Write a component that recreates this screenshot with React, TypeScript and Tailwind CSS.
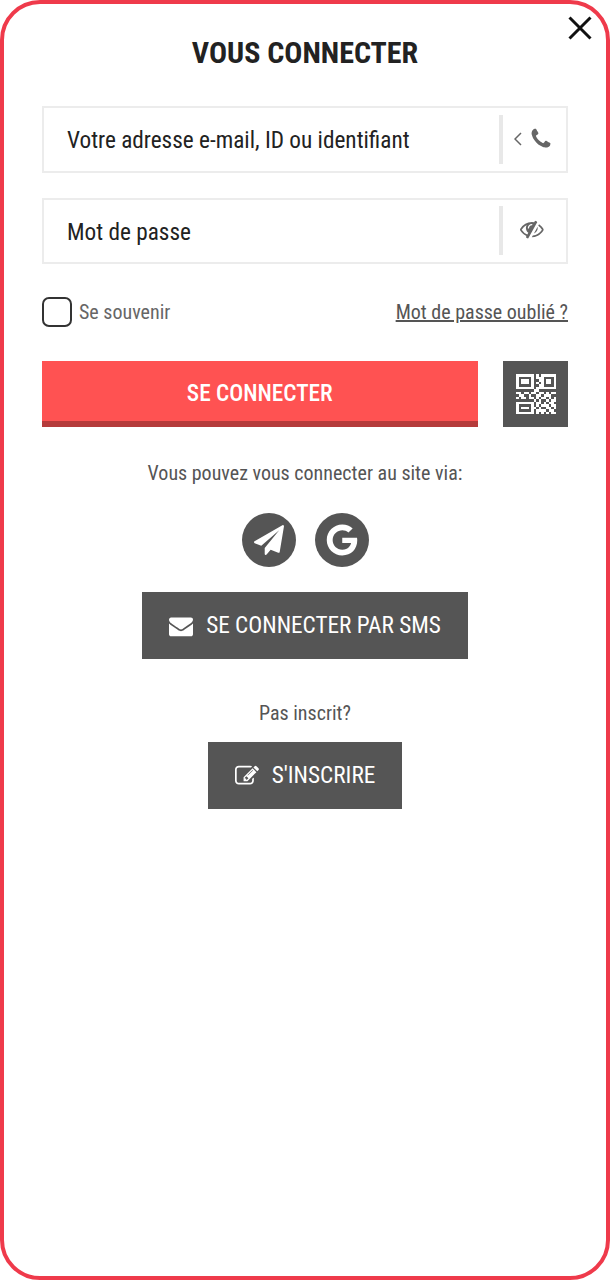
import React from "react";
import { FaGoogle } from "react-icons/fa";

const condensed = "[font-family:Roboto,'Liberation_Sans',sans-serif] [font-stretch:75%]";

// font awesome 4 glyphs, the 5 versions have different shapes
const planePath = "M1764 11q33 24 27 64l-256 1536q-5 29-32 45-14 8-31 8-11 0-24-5l-453-185-242 295q-18 23-49 23-13 0-22-4-19-7-30.5-23.5t-11.5-36.5v-349l864-1059-1069 925-395-162q-37-14-40-55-2-40 32-59l1664-960q15-9 32-9 20 0 36 11z";
const editPath = "M888 1184l116-116-152-152-116 116v56h96v96h56zm440-720q-16-16-33 1l-350 350q-17 17-1 33t33-1l350-350q17-17 1-33zm80 594v190q0 119-84.500 203.500t-203.500 84.500h-832q-119 0-203.500-84.500t-84.500-203.500v-832q0-119 84.500-203.500t203.500-84.500h832q63 0 117 25 15 7 18 23 3 17-9 29l-49 49q-14 14-32 8-23-6-45-6h-832q-66 0-113 47t-47 113v832q0 66 47 113t113 47h832q66 0 113-47t47-113v-126q0-13 9-22l64-64q15-15 35-7t20 29zm-96-738l288 288-672 672h-288v-288zm444 132l-92 92-288-288 92-92q28-28 68-28t68 28l152 152q28 28 28 68t-28 68z";
const envelopePath = "M1792 710v794q0 66-47 113t-113 47h-1472q-66 0-113-47t-47-113v-794q44 49 101 87 362 246 497 345 57 42 92.500 65.500t94.500 48 110 24.500h2q51 0 110-24.500t94.500-48 92.500-65.500q170-123 498-345 57-39 100-87zm0-294q0 79-49 151t-122 123q-376 261-468 325-10 7-42.500 30.500t-54 38-52 32.500-57.500 27-50 9h-2q-23 0-50-9t-57.500-27-52-32.500-54-38-42.500-30.500q-91-64-262-182.500t-205-142.500q-62-42-117-115.500t-55-136.500q0-78 41.500-130t118.500-52h1472q65 0 112.500 47t47.500 113z";
const eyeSlashPath = "M555 1335l78-141q-87-63-136-159t-49-203q0-121 61-225-229 117-381 353 167 258 427 375zm389-759q0-20-14-34t-34-14q-125 0-214.500 89.500t-89.500 214.500q0 20 14 34t34 14 34-14 14-34q0-86 61-147t147-61q20 0 34-14t14-34zm363-191q0 7-1 9-106 189-316 567t-315 566l-49 89q-10 16-28 16-12 0-134-70-16-10-16-28 0-12 44-87-143-65-263.500-173t-208.500-245q-20-31-20-69t20-69q153-235 380-371t496-136q89 0 180 17l54-97q10-16 28-16 5 0 18 6t31 15.500 33 18.500 31.500 18.500 19.500 11.500q16 10 16 27zm37 447q0 139-79 253.500t-209 164.500l280-502q8 45 8 84zm448 128q0 35-20 69-39 64-109 145-150 172-347.500 267t-419.500 95l74-132q212-18 392.500-137t301.500-307q-115-179-282-294l63-112q95 64 182.500 153t144.500 184q20 34 20 69z";
const phonePath = "M1600 1240q0 27-10 70.500t-21 68.500q-21 50-122 106-94 51-186 51-27 0-53-3.500t-57.500-12.500-47-14.500-55.500-20.500-49-18q-98-35-175-83-127-79-264-216t-216-264q-48-77-83-175-3-9-18-49t-20.500-55.500-14.500-47-12.500-57.500-3.500-53q0-92 51-186 56-101 106-122 25-11 68.500-21t70.500-10q14 0 21 3 18 6 53 76 11 19 30 54t35 63.500 31 53.500q3 4 17.500 25t21.500 35.500 7 28.500q0 20-28.500 50t-62 55-62 53-28.500 46q0 9 5 22.500t8.500 20.500 14 24 11.500 19q76 137 174 235t235 174q2 1 19 11.500t24 14 20.500 8.500 22.500 5q18 0 46-28.500t53-62 55-62 50-28.500q14 0 28.500 7t35.500 21.500 25 17.500q25 15 53.500 31t63.500 35 54 30q70 35 76 53 3 7 3 21z";

function Fa4({ d, size, vb = 1792, className }: { d: string; size: number; vb?: number; className?: string }) {
  return (
    <svg width={size} height={size} viewBox={`0 0 ${vb} ${vb}`} fill="currentColor" className={className}>
      <path d={d} />
    </svg>
  );
}

const qrCells = [
  "1111111010111111",
  "1000001011100001",
  "1011101001101101",
  "1011101010101101",
  "1000001001100001",
  "1111111011111111",
  "0000000110000000",
  "1101101101101011",
  "0110010011011100",
  "1011011010110101",
  "0000000101001011",
  "1111111011010110",
  "1000001010111011",
  "1011101101001101",
  "1000001011110110",
  "1111111010101011",
];

function QrIcon() {
  return (
    <svg width="40" height="40" viewBox="0 0 16 16" shapeRendering="crispEdges" fill="#fff" className="translate-x-px">
      {qrCells.map((row, y) =>
        row.split("").map((c, x) => (c === "1" ? <rect key={`${x}-${y}`} x={x} y={y} width="1" height="1" /> : null))
      )}
    </svg>
  );
}

function Field({ label, children }: { label: string; children: React.ReactNode }) {
  return (
    <div className="flex h-[66.5px] items-center border-2 border-[#ececec] bg-white pl-[23px] pr-[6px]">
      <span className="flex-1 pt-[3px] text-[23.25px] leading-none text-[#222]">{label}</span>
      <div className="flex h-[49px] w-[61px] items-center justify-center border-l-4 border-[#e8e8e8]">{children}</div>
    </div>
  );
}

export default function App() {
  return (
    <div className={`${condensed} relative flex h-[1280px] w-[610px] flex-col overflow-hidden rounded-[40px] border-4 border-[#ef3a4b] bg-white px-[38px]`}>
      <button className="absolute right-[14px] top-[12px] text-[#111]">
        <svg width="24" height="24" viewBox="0 0 24 24" fill="none" stroke="currentColor" strokeWidth="3">
          <path d="M1.500 1.500L22.500 22.500M22.500 1.500L1.500 22.500" />
        </svg>
      </button>

      <h1 className="mt-[31px] text-center text-[30px] font-bold leading-[36px] text-[#222]">VOUS CONNECTER</h1>

      <div className="mt-[35px] flex flex-col gap-[25px]">
        <Field label="Votre adresse e-mail, ID ou identifiant">
          <div className="flex translate-x-px items-center gap-[9px] text-[#666]">
            <svg width="8" height="14" viewBox="0 0 8 14" fill="none" stroke="#666" strokeWidth="1.500">
              <path d="M7 1L1 7L7 13" />
            </svg>
            <Fa4 d={phonePath} size={24} className="-mx-[2px]" />
          </div>
        </Field>
        <Field label="Mot de passe">
          <Fa4 d={eyeSlashPath} size={27} vb={2048} className="translate-x-[2px] text-[#666]" />
        </Field>
      </div>

      <div className="mt-[33px] flex items-center justify-between">
        <label className="flex items-center gap-[7px] text-[20px] leading-none text-[#666]">
          <span className="h-[30px] w-[30px] rounded-[7px] border-2 border-[#333]" />
          Se souvenir
        </label>
        <a className="text-[20px] leading-none text-[#555] underline">Mot de passe oublié ?</a>
      </div>

      <div className="mt-[34px] flex justify-between">
        <button className="h-[66px] w-[435.5px] border-b-[6px] border-[#b53b3b] bg-[#ff5252] pt-[6px] text-[23.25px] font-medium leading-none text-white">
          SE CONNECTER
        </button>
        <div className="flex h-[66px] w-[65.5px] items-center justify-center bg-[#555]">
          <QrIcon />
        </div>
      </div>

      <p className="mt-[34px] text-center text-[20px] leading-[24px] text-[#555]">Vous pouvez vous connecter au site via:</p>

      <div className="mt-[28px] flex justify-center gap-[19px]">
        <span className="flex h-[54px] w-[54px] items-center justify-center rounded-full bg-[#555] text-white">
          <Fa4 d={planePath} size={30} />
        </span>
        <span className="flex h-[54px] w-[54px] items-center justify-center rounded-full bg-[#555] text-white">
          <FaGoogle size={32} />
        </span>
      </div>

      <button className="mx-auto mt-[25px] flex h-[67px] w-[326px] items-center justify-center gap-[13px] bg-[#555] text-[23.25px] leading-none text-white">
        <Fa4 d={envelopePath} size={24} />
        SE CONNECTER PAR SMS
      </button>

      <p className="mt-[42px] text-center text-[20px] leading-[24px] text-[#555]">Pas inscrit?</p>

      <button className="mx-auto mt-[17px] flex h-[67px] w-[194px] items-center justify-center gap-[13px] bg-[#555] text-[23.25px] leading-none text-white">
        <Fa4 d={editPath} size={24} />
        S'INSCRIRE
      </button>
    </div>
  );
}
